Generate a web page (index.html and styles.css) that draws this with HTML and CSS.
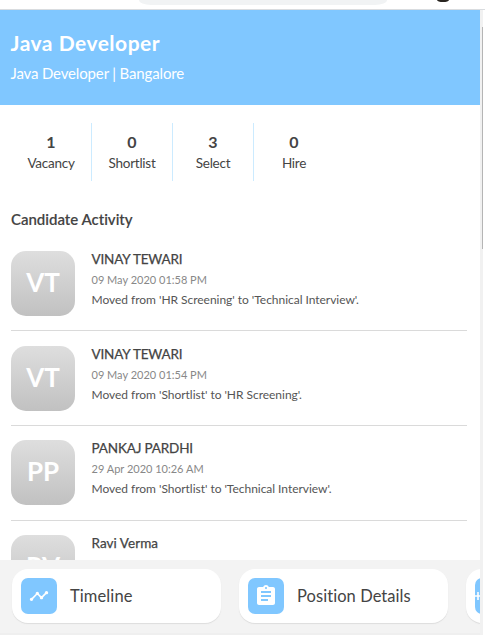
FILE: index.html
```html
<!DOCTYPE html>
<html lang="en">
<head>
<meta charset="utf-8">
<title>Java Developer</title>
<link rel="stylesheet" href="styles.css">
</head>
<body>
<div class="browser-bar"><span class="address"></span><span class="avatar"></span></div>
<div class="viewport">
  <div class="page">
    <header class="header">
      <h1>Java Developer</h1>
      <p>Java Developer | Bangalore</p>
    </header>
    <main class="content">
      <section class="stats">
        <div class="stat"><b>1</b><span>Vacancy</span></div>
        <div class="stat"><b>0</b><span>Shortlist</span></div>
        <div class="stat"><b>3</b><span>Select</span></div>
        <div class="stat"><b>0</b><span>Hire</span></div>
      </section>
      <h2>Candidate Activity</h2>
      <section class="activity">
        <article class="item">
          <div class="initials">VT</div>
          <div class="details"><h3>VINAY TEWARI</h3><time>09 May 2020 01:58 PM</time><p>Moved from 'HR Screening' to 'Technical Interview'.</p></div>
        </article>
        <article class="item">
          <div class="initials">VT</div>
          <div class="details"><h3>VINAY TEWARI</h3><time>09 May 2020 01:54 PM</time><p>Moved from 'Shortlist' to 'HR Screening'.</p></div>
        </article>
        <article class="item">
          <div class="initials">PP</div>
          <div class="details"><h3>PANKAJ PARDHI</h3><time>29 Apr 2020 10:26 AM</time><p>Moved from 'Shortlist' to 'Technical Interview'.</p></div>
        </article>
        <article class="item">
          <div class="initials">RV</div>
          <div class="details"><h3 class="mixed">Ravi Verma</h3></div>
        </article>
      </section>
    </main>
    <nav class="dock">
      <a class="card"><span class="icon"><svg width="20" height="20" viewBox="0 0 24 24"><path d="M23 8c0 1.1-.9 2-2 2-.18 0-.35-.02-.51-.07l-3.56 3.55c.05.16.07.34.07.52 0 1.1-.9 2-2 2s-2-.9-2-2c0-.18.02-.36.07-.52l-2.55-2.55c-.16.05-.34.07-.52.07s-.36-.02-.52-.07l-4.55 4.56c.05.16.07.33.07.51 0 1.1-.9 2-2 2s-2-.9-2-2 .9-2 2-2c.18 0 .35.02.51.07l4.56-4.55C8.02 9.36 8 9.18 8 9c0-1.1.9-2 2-2s2 .9 2 2c0 .18-.02.36-.07.52l2.55 2.55c.16-.05.34-.07.52-.07s.36.02.52.07l3.55-3.56C19.02 8.35 19 8.18 19 8c0-1.1.9-2 2-2s2 .9 2 2z"/></svg></span><span class="label">Timeline</span></a>
      <a class="card"><span class="icon"><svg width="24" height="24" viewBox="0 0 24 24"><path d="M19 3h-4.18C14.4 1.84 13.3 1 12 1c-1.3 0-2.4.84-2.82 2H5c-1.1 0-2 .9-2 2v14c0 1.1.9 2 2 2h14c1.1 0 2-.9 2-2V5c0-1.1-.9-2-2-2zm-7 0c.55 0 1 .45 1 1s-.45 1-1 1-1-.45-1-1 .45-1 1-1zm2 14H7v-2h7v2zm3-4H7v-2h10v2zm0-4H7V7h10v2z"/></svg></span><span class="label wide">Position Details</span></a>
      <a class="card"><span class="icon add"><svg width="8" height="8" viewBox="0 0 8 8"><path d="M2.2 0h1.6v3.2H7v1.6H3.8V8H2.2V4.8H0V3.2h2.2z"/></svg></span></a>
    </nav>
  </div>
  <div class="scrollbar"><i></i></div>
</div>
</body>
</html>
```

FILE: styles.css
```css
* { box-sizing: border-box; }
body { margin: 0; height: 635px; overflow: hidden; background: #fff; color: #444; font-family: Lato, "Open Sans", sans-serif; font-variant-ligatures: none; }
h1, h2, h3, p { margin: 0; font-weight: 400; white-space: nowrap; }
.browser-bar { display: flex; height: 10px; border-bottom: 1px solid #d9dcdf; align-items: flex-start; }
.address { width: 248px; height: 5px; margin-left: 139px; background: #f1f3f4; border-radius: 0 0 12px 12px / 0 0 5px 5px; }
.avatar { width: 12px; height: 2px; margin-left: 50px; background: #292520; border-radius: 0 0 6px 6px / 0 0 2px 2px; }
.viewport { display: flex; width: 483px; height: 625px; }
.page { display: flex; flex-direction: column; width: 480px; height: 625px; overflow: hidden; }
.header { flex: none; height: 95px; padding: 20px 10.5px 0; background: #80c7ff; color: #fff; }
.header h1 { font-size: 21px; line-height: 26px; font-weight: 700; letter-spacing: .5px; }
.header p { margin-top: 7px; font-size: 15px; line-height: 20px; letter-spacing: -.15px; }
.content { flex: none; height: 455px; padding: 18px 13px 0 11px; overflow: hidden; }
.stats { display: flex; height: 58px; }
.stat { display: flex; flex-direction: column; align-items: center; width: 81px; padding-top: 9px; border-left: 1px solid #ccebff; }
.stat:first-child { width: 80px; border-left: 0; }
.stat b { font-size: 16px; line-height: 20px; font-weight: 700; }
.stat span { margin-top: 1px; font-size: 13.5px; line-height: 20px; letter-spacing: -.25px; }
h2 { margin-top: 28px; font-size: 15px; line-height: 20px; font-weight: 600; -webkit-text-stroke: .1px #444; letter-spacing: -.02px; }
.item { display: flex; gap: 17px; height: 94.75px; padding-top: 14px; border-bottom: 1px solid #dadada; }
.item:first-child { height: 102px; padding-top: 22px; }
.item:nth-child(2) { padding-top: 15px; }
.initials { flex: none; display: flex; align-items: center; justify-content: center; width: 64px; height: 65px; padding-bottom: 3px; border-radius: 15px; background: linear-gradient(#dedede, #c1c1c1); color: #fff; font-size: 26px; font-weight: 700; }
.details { margin: -1px 0 0 -.5px; }
.details h3 { font-size: 13.5px; line-height: 18px; letter-spacing: -.16px; -webkit-text-stroke: .25px #444; }
.details h3.mixed { letter-spacing: .05px; }
.details time { display: block; margin-top: 4px; font-size: 11px; line-height: 16px; color: #888; letter-spacing: 0; }
.details p { margin-top: 3px; font-size: 12px; line-height: 18px; letter-spacing: -.03px; color: #555; }
.dock { flex: none; display: flex; gap: 18px; height: 75px; padding: 9px 0 0 12px; background: #f3f3f3; border-bottom: 2px solid #efefef; }
.card { flex: none; display: flex; align-items: center; width: 209px; height: 54px; padding-left: 9px; gap: 13px; border-radius: 16px; background: #fff; box-shadow: 0 1px 1px #ddd; }
.icon { flex: none; display: flex; align-items: center; justify-content: center; width: 36px; height: 36px; border-radius: 7px; background: #80c7ff; }
.icon svg { fill: #fff; }
.icon.add { justify-content: flex-start; }
.label { font-size: 16.5px; letter-spacing: .1px; }
.label.wide { letter-spacing: .06px; }
.scrollbar { width: 3px; height: 625px; padding: 17px 0 0 2px; background: #f1f1f1; }
.scrollbar i { display: block; width: 1px; height: 222px; background: #b5b5b5; }
```
